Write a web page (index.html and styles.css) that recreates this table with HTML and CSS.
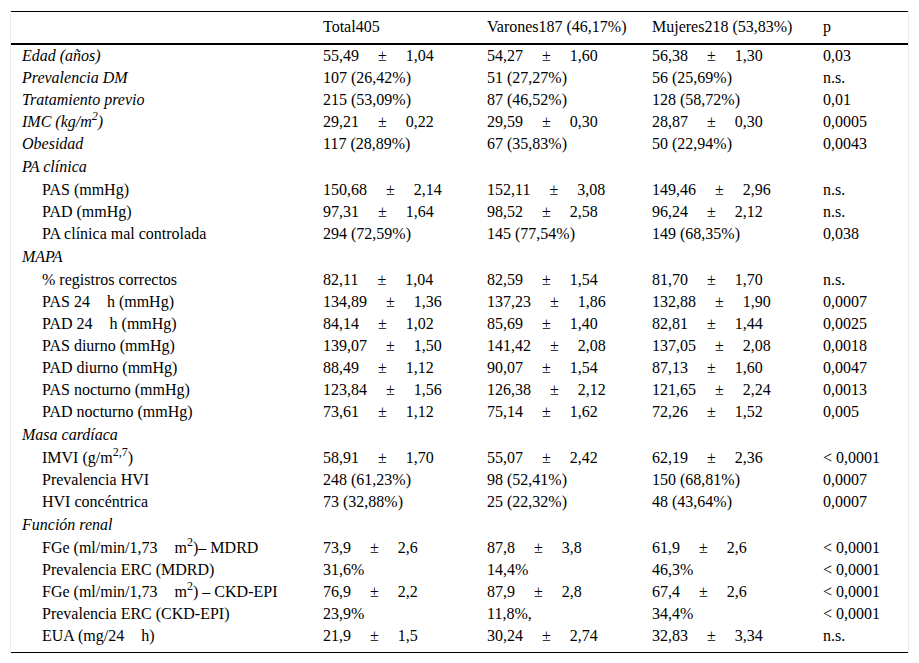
FILE: index.html
```html
<!DOCTYPE html>
<html lang="es">
<head>
<meta charset="utf-8">
<title>Tabla</title>
<link rel="stylesheet" href="styles.css">
</head>
<body>
<div class="wrap">
<table class="tbl">
  <colgroup>
    <col class="c-label"><col class="c-total"><col class="c-var"><col class="c-muj"><col class="c-p">
  </colgroup>
  <thead>
    <tr><th></th><th>Total405</th><th>Varones187 (46,17%)</th><th>Mujeres218 (53,83%)</th><th>p</th></tr>
  </thead>
  <tbody>
    <tr><td class="it">Edad (años)</td><td>55,49<span class="pm">±</span>1,04</td><td>54,27<span class="pm">±</span>1,60</td><td>56,38<span class="pm">±</span>1,30</td><td>0,03</td></tr>
    <tr><td class="it">Prevalencia DM</td><td>107 (26,42%)</td><td>51 (27,27%)</td><td>56 (25,69%)</td><td>n.s.</td></tr>
    <tr><td class="it">Tratamiento previo</td><td>215 (53,09%)</td><td>87 (46,52%)</td><td>128 (58,72%)</td><td>0,01</td></tr>
    <tr><td class="it">IMC (kg/m<sup>2</sup>)</td><td>29,21<span class="pm">±</span>0,22</td><td>29,59<span class="pm">±</span>0,30</td><td>28,87<span class="pm">±</span>0,30</td><td>0,0005</td></tr>
    <tr><td class="it">Obesidad</td><td>117 (28,89%)</td><td>67 (35,83%)</td><td>50 (22,94%)</td><td>0,0043</td></tr>
    <tr class="sec"><td class="it">PA clínica</td><td></td><td></td><td></td><td></td></tr>
    <tr><td class="ind">PAS (mmHg)</td><td>150,68<span class="pm">±</span>2,14</td><td>152,11<span class="pm">±</span>3,08</td><td>149,46<span class="pm">±</span>2,96</td><td>n.s.</td></tr>
    <tr><td class="ind">PAD (mmHg)</td><td>97,31<span class="pm">±</span>1,64</td><td>98,52<span class="pm">±</span>2,58</td><td>96,24<span class="pm">±</span>2,12</td><td>n.s.</td></tr>
    <tr><td class="ind">PA clínica mal controlada</td><td>294 (72,59%)</td><td>145 (77,54%)</td><td>149 (68,35%)</td><td>0,038</td></tr>
    <tr class="sec"><td class="it">MAPA</td><td></td><td></td><td></td><td></td></tr>
    <tr><td class="ind">% registros correctos</td><td>82,11<span class="pm">±</span>1,04</td><td>82,59<span class="pm">±</span>1,54</td><td>81,70<span class="pm">±</span>1,70</td><td>n.s.</td></tr>
    <tr><td class="ind">PAS 24<span class="gap"></span>h (mmHg)</td><td>134,89<span class="pm">±</span>1,36</td><td>137,23<span class="pm">±</span>1,86</td><td>132,88<span class="pm">±</span>1,90</td><td>0,0007</td></tr>
    <tr><td class="ind">PAD 24<span class="gap"></span>h (mmHg)</td><td>84,14<span class="pm">±</span>1,02</td><td>85,69<span class="pm">±</span>1,40</td><td>82,81<span class="pm">±</span>1,44</td><td>0,0025</td></tr>
    <tr><td class="ind">PAS diurno (mmHg)</td><td>139,07<span class="pm">±</span>1,50</td><td>141,42<span class="pm">±</span>2,08</td><td>137,05<span class="pm">±</span>2,08</td><td>0,0018</td></tr>
    <tr><td class="ind">PAD diurno (mmHg)</td><td>88,49<span class="pm">±</span>1,12</td><td>90,07<span class="pm">±</span>1,54</td><td>87,13<span class="pm">±</span>1,60</td><td>0,0047</td></tr>
    <tr><td class="ind">PAS nocturno (mmHg)</td><td>123,84<span class="pm">±</span>1,56</td><td>126,38<span class="pm">±</span>2,12</td><td>121,65<span class="pm">±</span>2,24</td><td>0,0013</td></tr>
    <tr><td class="ind">PAD nocturno (mmHg)</td><td>73,61<span class="pm">±</span>1,12</td><td>75,14<span class="pm">±</span>1,62</td><td>72,26<span class="pm">±</span>1,52</td><td>0,005</td></tr>
    <tr class="sec"><td class="it">Masa cardíaca</td><td></td><td></td><td></td><td></td></tr>
    <tr><td class="ind">IMVI (g/m<sup>2,7</sup>)</td><td>58,91<span class="pm">±</span>1,70</td><td>55,07<span class="pm">±</span>2,42</td><td>62,19<span class="pm">±</span>2,36</td><td>&lt; 0,0001</td></tr>
    <tr><td class="ind">Prevalencia HVI</td><td>248 (61,23%)</td><td>98 (52,41%)</td><td>150 (68,81%)</td><td>0,0007</td></tr>
    <tr><td class="ind">HVI concéntrica</td><td>73 (32,88%)</td><td>25 (22,32%)</td><td>48 (43,64%)</td><td>0,0007</td></tr>
    <tr class="sec"><td class="it">Función renal</td><td></td><td></td><td></td><td></td></tr>
    <tr><td class="ind">FGe (ml/min/1,73<span class="gap"></span>m<sup>2</sup>)– MDRD</td><td>73,9<span class="pm">±</span>2,6</td><td>87,8<span class="pm">±</span>3,8</td><td>61,9<span class="pm">±</span>2,6</td><td>&lt; 0,0001</td></tr>
    <tr><td class="ind">Prevalencia ERC (MDRD)</td><td>31,6%</td><td>14,4%</td><td>46,3%</td><td>&lt; 0,0001</td></tr>
    <tr><td class="ind">FGe (ml/min/1,73<span class="gap"></span>m<sup>2</sup>) – CKD-EPI</td><td>76,9<span class="pm">±</span>2,2</td><td>87,9<span class="pm">±</span>2,8</td><td>67,4<span class="pm">±</span>2,6</td><td>&lt; 0,0001</td></tr>
    <tr><td class="ind">Prevalencia ERC (CKD-EPI)</td><td>23,9%</td><td>11,8%,</td><td>34,4%</td><td>&lt; 0,0001</td></tr>
    <tr class="last"><td class="ind">EUA (mg/24<span class="gap"></span>h)</td><td>21,9<span class="pm">±</span>1,5</td><td>30,24<span class="pm">±</span>2,74</td><td>32,83<span class="pm">±</span>3,34</td><td>n.s.</td></tr>
  </tbody>
</table>
</div>
</body>
</html>
```

FILE: styles.css
```css
html, body {
  margin: 0;
  padding: 0;
  background: #fff;
}
body {
  font-family: "Liberation Serif", "Times New Roman", serif;
  font-size: 16px;
  color: #000;
}
.wrap {
  margin: 10px 0 0 10px;
  width: 897px;
  border-left: 1px solid #ececec;
  border-right: 1px solid #ececec;
  padding-top: 1px;
}
.tbl {
  width: 897px;
  border-collapse: collapse;
  table-layout: fixed;
  border-top: 1px solid #000;
  border-bottom: 1px solid #000;
}
.c-label { width: 301px; }
.c-total { width: 164px; }
.c-var { width: 165px; }
.c-muj { width: 171px; }
.c-p { width: 96px; }
.tbl th {
  font-weight: normal;
  text-align: left;
  height: 30px;
  padding: 0 0 1px 11px;
  border-bottom: 2px solid #000;
  vertical-align: middle;
  white-space: nowrap;
}
.tbl td {
  height: 22px;
  padding: 0 0 0 11px;
  vertical-align: middle;
  white-space: nowrap;
  line-height: 18px;
}
.tbl tr.sec td {
  height: 24px;
}
.tbl tr.last td {
  height: 27px;
  padding-bottom: 5px;
  vertical-align: top;
  padding-top: 2px;
  box-sizing: border-box;
}
.it {
  font-style: italic;
}
.tbl td.ind {
  padding-left: 31px;
}
.pm {
  margin: 0 19px;
}
.gap {
  display: inline-block;
  width: 17px;
}
sup {
  font-size: 12px;
  line-height: 0;
  vertical-align: 7px;
}
```
